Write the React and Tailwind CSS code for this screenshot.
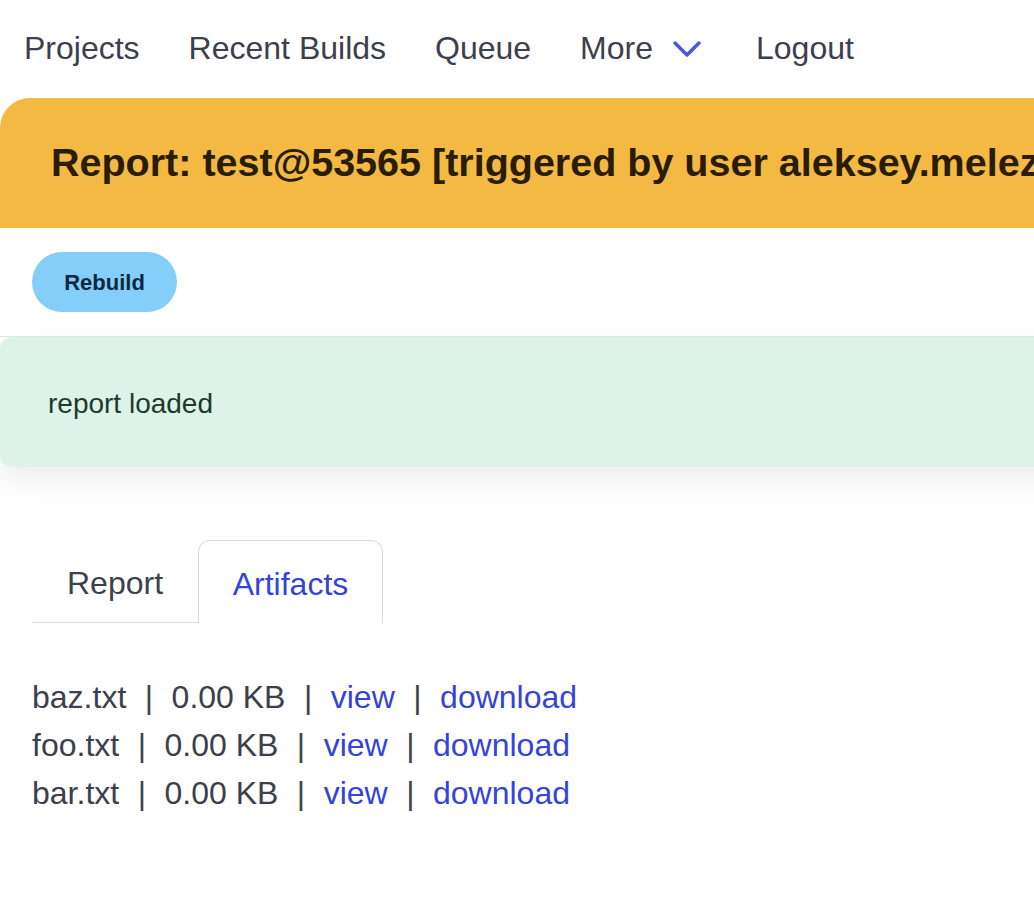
const navLinks = ["Projects", "Recent Builds", "Queue"];

const artifacts = [
  { name: "baz.txt", size: "0.00 KB" },
  { name: "foo.txt", size: "0.00 KB" },
  { name: "bar.txt", size: "0.00 KB" },
];

function Sep() {
  return <span className="mx-[18.5px] text-[#3f424d]">|</span>;
}

export default function App() {
  return (
    <div
      className="w-[1034px] min-h-[910px] overflow-hidden bg-white"
      style={{ fontFamily: '"Liberation Sans", Arial, sans-serif' }}
    >
      {/* top nav */}
      <nav className="flex items-center h-[98px] pl-[24px] pb-[2px] text-[32px] leading-[48px] text-[#3d404c] whitespace-nowrap">
        {navLinks.map((l) => (
          <a key={l} href="#" className="mr-[49px]">
            {l}
          </a>
        ))}
        <a href="#" className="flex items-center">
          More
          <svg width="30" height="18" viewBox="0 0 30 18" className="ml-[19px] mt-[2px]" fill="none">
            <polyline points="3,3 15,15 27,3" stroke="#4a55e6" strokeWidth="3.5" strokeLinecap="round" strokeLinejoin="round" />
          </svg>
        </a>
        <a href="#" className="ml-[54px]">
          Logout
        </a>
      </nav>

      <div className="w-[1400px]">
        {/* title band */}
        <div className="h-[130px] flex items-center pl-[51px] bg-[#f4b943] rounded-tl-[30px]">
          <h1 className="text-[39.5px] font-bold text-[#2a1d06] whitespace-nowrap">
            Report: test@53565 [triggered by user aleksey.melezhik]
          </h1>
        </div>

        {/* actions */}
        <div className="h-[109px] pl-[32px] pt-[24px] border-b border-[#e6e6e6]">
          <button className="h-[60px] w-[145px] rounded-full bg-[#83cff9] text-[22px] font-bold text-[#0f2740]">
            Rebuild
          </button>
        </div>

        {/* notification */}
        <div className="h-[130px] flex items-center pl-[48px] pt-[4px] bg-[#ddf2e9] rounded-l-[12px] shadow-[0_14px_28px_rgba(0,0,0,0.07)]">
          <p className="text-[28px] text-[#1d3a2b]">report loaded</p>
        </div>
      </div>

      {/* tabs */}
      <div className="mt-[73px] ml-[32px] flex items-end text-[32px] leading-[36px]">
        <button className="h-[83px] w-[166px] pt-[3px] border-b border-[#d9d9de] text-[#3e414c]">
          Report
        </button>
        <button className="h-[83px] w-[185px] pt-[3px] border border-b-0 border-[#d6d6dc] rounded-t-[12px] text-[#3444d9]">
          Artifacts
        </button>
      </div>

      {/* artifact list */}
      <ul className="mt-[50px] ml-[32px] text-[32px] leading-[48px] text-[#3d404c] whitespace-nowrap">
        {artifacts.map((a) => (
          <li key={a.name}>
            {a.name}
            <Sep />
            {a.size}
            <Sep />
            <a href="#" className="text-[#3444d9]">view</a>
            <Sep />
            <a href="#" className="text-[#3444d9]">download</a>
          </li>
        ))}
      </ul>
    </div>
  );
}
